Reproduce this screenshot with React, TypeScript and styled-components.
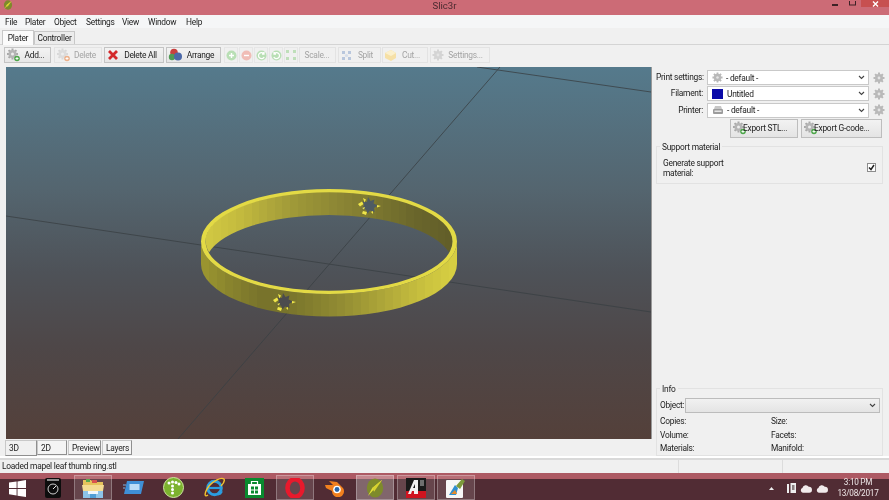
import React from "react";
import styled, { createGlobalStyle } from "styled-components";

const Global = createGlobalStyle`
  html, body { margin: 0; padding: 0; background: #f0f0f0; overflow: hidden; }
  #root { width: 889px; height: 500px; }
  * { box-sizing: border-box; }
`;

const Page = styled.div`
  width: 889px; height: 500px; display: flex; flex-direction: column;
  font-family: Roboto, "Open Sans", sans-serif; font-size: 8.4px; letter-spacing: -0.25px; color: #222;
  overflow: hidden; filter: blur(0.3px); background: #f0f0f0;
`;
const TitleBar = styled.div`
  height: 15px; flex: none; background: #cc6b76; display: grid; grid-template-columns: 1fr auto 1fr; align-items: start;
`;
const TitleIcon = styled.div` padding: 0 0 0 3px; height: 15px; display: flex; `;
const TitleText = styled.div` font-size: 9.6px; letter-spacing: 0; line-height: 11px; color: #4a2a30; `;
const WinControls = styled.div` display: flex; justify-content: flex-end; align-items: flex-start; `;
const WinBtn = styled.div`
  width: ${p => p.$w}px; height: 7px; display: flex; align-items: center; justify-content: center;
  background: ${p => p.$bg || "transparent"}; margin-right: ${p => p.$mr || 0}px;
`;
const MenuBar = styled.div`
  height: 14px; flex: none; background: #f5f6f7; display: flex; padding: 0 0 0 5px; align-items: center;
  border-bottom: 1px solid #f0f0f0;
`;
const MenuItem = styled.span` color: #222; width: ${p => p.$w}px; `;
const TabStrip = styled.div`
  height: 16px; flex: none; background: #f0f0f0; display: flex; align-items: flex-end; padding-left: 2px;
  border-bottom: 1px solid #d4d4d4;
`;
const TopTab = styled.div`
  height: ${p => p.$active ? 15 : 13}px; width: ${p => p.$w}px; display: flex; align-items: center; justify-content: center;
  background: ${p => p.$active ? "#fbfbfb" : "#ececec"}; border: 1px solid #c8c8c8; border-bottom: none;
  margin-bottom: ${p => p.$active ? -1 : 0}px; position: relative;
`;
const Toolbar = styled.div`
  height: 22px; flex: none; display: flex; align-items: flex-start; padding: 2px 0 0 4px; background: #f0f0f0;
`;
const ToolBtn = styled.div`
  width: ${p => p.$w}px; margin-right: ${p => p.$mr ?? 2}px; height: 16px; display: flex; align-items: center; padding-left: 1px;
  background: ${p => p.$off ? "#f0f0f0" : "linear-gradient(#f3f3f3, #e6e6e6)"};
  border: 1px solid ${p => p.$off ? "#e3e3e3" : "#c4c4c4"};
  color: ${p => p.$off ? "#a4a4a4" : "#222"};
`;
const BtnLabel = styled.span` flex: 1; text-align: center; padding-right: 2px; white-space: nowrap; `;
const SmallBtn = styled.div`
  width: 14px; height: 16px; margin-right: 1px; display: flex; align-items: center; justify-content: center;
  border: 1px solid #e6e6e6;
`;
const Main = styled.div` flex: 1; display: flex; min-height: 0; padding-left: 6px; background: #f0f0f0; `;
const CanvasCol = styled.div` width: 646px; flex: none; display: flex; flex-direction: column; `;
const Viewport = styled.div` width: 646px; height: 372px; flex: none; background: #555; line-height: 0; border-right: 1px solid #999; `;
const ViewTabs = styled.div` display: flex; height: 16px; margin: 1px 0 0 -1px; `;
const ViewTab = styled.div`
  width: ${p => p.$w}px; height: ${p => p.$active ? 16 : 15}px; margin-right: ${p => p.$mr ?? 1}px;
  display: flex; align-items: center; padding-left: 3px;
  background: ${p => p.$active ? "#f0f0f0" : "#f4f4f4"};
  border: 1px solid #c8c8c8; border-right: 1px solid #8f8f8f; border-bottom: 1px solid #8f8f8f;
`;
const Sidebar = styled.div` flex: 1; display: flex; flex-direction: column; padding: 3px 0 2px 4px; min-width: 0; `;
const PresetGrid = styled.div`
  display: grid; grid-template-columns: 47px 162px 12px; column-gap: 4px; row-gap: 1.3px; align-items: center;
`;
const PresetLabel = styled.label` text-align: right; white-space: nowrap; line-height: 15px; `;
const Select = styled.div`
  height: 15px; background: #fff; border: 1px solid #c9c9c9; display: flex; align-items: center; padding: 0 3px 0 4px; gap: 3px;
`;
const Grow = styled.span` flex: 1; white-space: nowrap; `;
const Swatch = styled.span` width: 11px; height: 10px; background: #0a0aa8; display: block; flex: none; margin-right: 1px; `;
const ExportRow = styled.div` display: flex; padding-left: 74px; gap: 3px; margin-top: 1px; `;
const ExportBtn = styled.div`
  width: ${p => p.$w}px; height: 19px; background: linear-gradient(#f2f2f2, #e4e4e4); border: 1px solid #bdbdbd;
  display: flex; align-items: center; white-space: nowrap; padding-left: 1px; gap: 0;
  span { margin-left: -4px; position: relative; }
`;
const Group = styled.fieldset`
  margin: ${p => p.$mt || 0}; padding: ${p => p.$pad}; border: 1px solid #e2e2e2; min-width: 0; width: 227px;
  legend { padding: 0 2px; margin-left: 0; line-height: 10px; }
`;
const SupportRow = styled.div` display: flex; justify-content: space-between; align-items: center; padding-left: 3px; `;
const SupportLabel = styled.div` width: 70px; line-height: 10px; `;
const Check = styled.span`
  width: 9px; height: 9px; border: 1px solid #8c8c8c; background: #fff; display: flex; align-items: center; justify-content: center; margin-right: 6px;
`;
const ObjectRow = styled.div` display: flex; align-items: center; `;
const ObjectLabel = styled.span` width: 25px; `;
const ObjectSelect = styled.div`
  width: 195px; height: 15px; background: linear-gradient(#f1f1f1, #e4e4e4); border: 1px solid #bcbcbc;
  display: flex; justify-content: flex-end; align-items: center; padding-right: 3px;
`;
const InfoGrid = styled.div`
  display: grid; grid-template-columns: 111px 1fr; grid-auto-rows: 13.5px; margin-top: 2px; align-items: center;
`;
const Spacer = styled.div` flex: 1; `;
const StatusBar = styled.div`
  height: 15px; flex: none; display: flex; background: #f0f0f0; border-top: 2px solid #d9d9d9;
  box-shadow: 0 -2px 0 #fff;
`;
const StatusCell = styled.div`
  width: ${p => p.$w}; padding-left: 2px; line-height: 12px; border-right: ${p => p.$line ? "1px solid #dcdcdc" : "none"}; white-space: nowrap;
`;
const Taskbar = styled.div`
  height: 27px; flex: none; display: flex; background: #512c34; border-top: 6px solid #ad5a64; position: relative; color: #f0e6e8;
`;
const Start = styled.div` width: 34px; display: flex; align-items: center; justify-content: center; margin-top: -3px; `;
const Slots = styled.div` display: flex; gap: 2.3px; margin-top: -4px; height: 25px; `;
const Slot = styled.div`
  width: 38px; display: flex; align-items: center; justify-content: center;
  background: ${p => p.$state === "active" ? "rgba(255,255,255,.28)" : p.$state === "open" ? "rgba(255,255,255,.12)" : "transparent"};
  border: 1px solid ${p => p.$state ? "rgba(255,255,255,.28)" : "transparent"};
`;
const Tray = styled.div` margin-left: auto; display: flex; align-items: center; gap: 4px; margin-top: -3px; padding-right: 3px; `;
const Clock = styled.div` width: 56px; text-align: center; font-size: 8.2px; line-height: 11px; color: #efe7e8; margin-left: -2px; `;

const gearPath = (cx: number, cy: number, r: number) => {
  let d = "";
  for (let i = 0; i < 8; i++) {
    const a = (i * Math.PI) / 4;
    const x = cx + Math.cos(a) * r, y = cy + Math.sin(a) * r;
    d += `M${(cx + Math.cos(a) * (r * 0.6)).toFixed(1)} ${(cy + Math.sin(a) * (r * 0.6)).toFixed(1)}L${x.toFixed(1)} ${y.toFixed(1)}`;
  }
  return d;
};
const Gear = ({ size = 12, c = "#b9b9b9" }: { size?: number; c?: string }) => (
  <svg width={size} height={size} viewBox="0 0 12 12" style={{ flex: "none" }}>
    <path d={gearPath(6, 6, 5.5)} stroke={c} strokeWidth="2" />
    <circle cx="6" cy="6" r="4" fill={c} />
    <circle cx="6" cy="6" r="1.400" fill="#e4e4e4" />
  </svg>
);
const GearBadge = ({ badge, dim }: { badge: string; dim?: boolean }) => (
  <svg width="15" height="14" viewBox="0 0 15 14" style={{ flex: "none" }}>
    <path d={gearPath(6.5, 6, 5.5)} stroke={dim ? "#d8d8d8" : "#a9a9a9"} strokeWidth="2" />
    <circle cx="6.500" cy="6" r="4" fill={dim ? "#dcdcdc" : "#b5b5b5"} />
    <circle cx="6.500" cy="6" r="1.500" fill="#eee" />
    <circle cx="11" cy="10.500" r="2.800" fill={badge} />
    <path d="M9.500 10.500h3M11 9v3" stroke="#fff" strokeWidth=".9" />
  </svg>
);
const Cross = () => (
  <svg width="14" height="12" viewBox="0 0 14 12" style={{ flex: "none" }}>
    <path d="M3 2l8 8M11 2l-8 8" stroke="#d3282a" strokeWidth="2.800" />
  </svg>
);
const Balls = () => (
  <svg width="15" height="14" viewBox="0 0 15 14" style={{ flex: "none" }}>
    <circle cx="6" cy="4.500" r="3.800" fill="#c8403f" />
    <circle cx="4" cy="9" r="3.200" fill="#4f9a55" />
    <circle cx="10" cy="8.500" r="4" fill="#4b68a8" />
  </svg>
);
const RoundIcon = ({ c, kind }: { c: string; kind: string }) => (
  <svg width="11" height="11" viewBox="0 0 11 11">
    <circle cx="5.500" cy="5.500" r="5" fill={c} />
    {kind === "plus" && <path d="M3 5.500h5M5.500 3v5" stroke="#fff" strokeWidth="1.400" />}
    {kind === "minus" && <path d="M3 5.500h5" stroke="#fff" strokeWidth="1.400" />}
    {kind === "ccw" && <path d="M8 4a3 3 0 1 0 .2 3M8 2v2.200H6" stroke="#fff" strokeWidth="1.200" fill="none" />}
    {kind === "cw" && <path d="M3 4a3 3 0 1 1-.2 3M3 2v2.200h2" stroke="#fff" strokeWidth="1.200" fill="none" />}
  </svg>
);
const FourArrows = () => (
  <svg width="12" height="12" viewBox="0 0 12 12">
    <path d="M1 1h3v3H1zM8 1h3v3H8zM1 8h3v3H1zM8 8h3v3H8z" fill="#bfdfba" />
  </svg>
);
const SplitIcon = () => (
  <svg width="13" height="13" viewBox="0 0 13 13" style={{ flex: "none" }}>
    <path d="M2 2h3v3H2zM8 2h3v3H8zM2 8h3v3H2zM8 8h3v3H8z" fill="#b9c7dd" />
    <circle cx="6.500" cy="6.500" r="1.600" fill="#d6deea" />
  </svg>
);
const BoxIcon = () => (
  <svg width="13" height="13" viewBox="0 0 13 13" style={{ flex: "none" }}>
    <path d="M1 4l6-3 5 3v5l-5 3-6-3z" fill="#f6e0a6" />
    <path d="M1 4l6 3 5-3-5-3z" fill="#fbf0cd" />
  </svg>
);
const Chevron = () => (
  <svg width="7" height="5" viewBox="0 0 7 5" style={{ flex: "none" }}>
    <path d="M1 1l2.500 2.500L6 1" stroke="#444" strokeWidth="1.100" fill="none" />
  </svg>
);
const PrinterIcon = () => (
  <svg width="12" height="10" viewBox="0 0 12 10" style={{ flex: "none" }}>
    <path d="M3 1h6l1 3H2z" fill="#c7c7c7" />
    <rect x="1" y="4" width="10" height="5" rx="1" fill="#9c9c9c" />
    <rect x="2.500" y="5.500" width="7" height="1.500" fill="#e5e5e5" />
  </svg>
);
const Leaf = ({ size = 14 }: { size?: number }) => (
  <svg width={size} height={size} viewBox="0 0 20 22">
    <ellipse cx="10" cy="11" rx="9" ry="10.500" fill="#7e8a2b" />
    <path d="M18 2L2 20l5-9z" fill="#e6e23a" />
    <path d="M18 2L7 11l2 4z" fill="#d8d42f" />
  </svg>
);

const hex = (c: string) => [1, 3, 5].map(i => parseInt(c.slice(i, i + 2), 16));
const facets = (keys: string[], n: number) => {
  const out: React.ReactNode[] = [];
  for (let i = 0; i < n; i++) {
    const t = (i / (n - 1)) * (keys.length - 1);
    const k = Math.min(Math.floor(t), keys.length - 2);
    const a = hex(keys[k]), b = hex(keys[k + 1]);
    const c = `rgb(${a.map((v, j) => Math.round(v + (b[j] - v) * (t - k))).join(",")})`;
    out.push(<stop key={i + "a"} offset={i / n} stopColor={c} />);
    out.push(<stop key={i + "b"} offset={(i + 1) / n} stopColor={c} />);
  }
  return out;
};
const backKeys = ["#d0c742", "#c4bb3e", "#afa73b", "#9c9637", "#908a35", "#837e32", "#75712e", "#69652b", "#625e29"];
const frontKeys = ["#9a9430", "#87822d", "#78732b", "#78742c", "#85802f", "#938d33", "#a59e37", "#b8b03b", "#cac23e", "#d6ce42"];

const Star = ({ x, y, fill }: { x: number; y: number; fill: string }) => (
  <g transform={`translate(${x} ${y})`}>
    <path d="M0 -8l2.500 4 4 -1.500 -1 4 4.500 2 -4 2.500 .5 4 -4.500 -1.500 -2.500 3 -1.500 -4 -4.500 -.5 2.500 -3.500 -1.500 -4 4.500 .5z" fill={fill} />
    <path d="M-10 -1l4 -2.500 1.500 2.500 -3.500 2.500zM9 0l4 1 -4 1.500zM-5 6l4 1 -1 3 -4 -1.500zM-5 -7l3 1.500 -1.500 3zM3 7l2 -1 0 3zM-6 3l3 -1 -1 2.500z" fill="#efe64a" />
  </g>
);

const ThreeD = () => (
  <svg width="645" height="372" viewBox="6 67 645 372">
    <defs>
      <linearGradient id="bg" x1="0" y1="0" x2="0" y2="1">
        <stop offset="0" stopColor="#557a8c" />
        <stop offset="0.33" stopColor="#54656f" />
        <stop offset="0.55" stopColor="#4e5258" />
        <stop offset="0.75" stopColor="#4e4748" />
        <stop offset="1" stopColor="#54403a" />
      </linearGradient>
      <linearGradient id="back" gradientUnits="userSpaceOnUse" x1="205" x2="453" y1="0" y2="0">{facets(backKeys, 32)}</linearGradient>
      <linearGradient id="front" gradientUnits="userSpaceOnUse" x1="201" x2="457" y1="0" y2="0">{facets(frontKeys, 32)}</linearGradient>
    </defs>
    <rect x="6" y="67" width="645" height="372" fill="url(#bg)" />
    <g stroke="#3a4044" strokeWidth="1" opacity=".8" fill="none">
      <path d="M500 67L178 439" />
      <path d="M6 216L651 312" />
      <path d="M477 67L651 92" />
    </g>
    <path d="M209 252.500A123.500 49.200 0 1 1 449 252.500A123.500 49.200 0 0 0 209 252.500Z" fill="url(#back)" />
    <path d="M201 241.500A128 52.500 0 0 0 457 241.500V264A128 52.500 0 0 1 201 264Z" fill="url(#front)" />
    <path fillRule="evenodd" d="M201 241.500A128 52.500 0 1 1 457 241.500A128 52.500 0 1 1 201 241.500ZM205.500 241.500A123.500 49.200 0 1 0 452.500 241.500A123.500 49.200 0 1 0 205.500 241.500Z" fill="#e3da45" />
    <Star x={368} y={205} fill="#4e5b63" />
    <Star x={283} y={301} fill="#4b4b4e" />
  </svg>
);

const Win8 = () => (
  <svg width="17" height="17" viewBox="0 0 17 17">
    <path d="M0 2.600L7.600 1.500v6.400H0zM8.500 1.400L17 0v7.900H8.500zM0 8.900h7.600v6.500L0 14.300zM8.500 8.900H17V17l-8.500-1.300z" fill="#fff" />
  </svg>
);
const Watch = () => (
  <svg width="18" height="20" viewBox="0 0 18 20">
    <rect x="1" y="0" width="16" height="20" rx="2" fill="#0d0d0d" />
    <rect x="3" y="1" width="12" height="2" fill="#8a8a8a" />
    <circle cx="9" cy="11" r="5" fill="none" stroke="#cfcfcf" strokeWidth="1" />
    <path d="M9 11l3-3" stroke="#e8e8e8" />
  </svg>
);
const Folder = () => (
  <svg width="22" height="20" viewBox="0 0 22 20">
    <path d="M1 2h8l2 2h10v9H1z" fill="#e6c35c" />
    <rect x="4" y="1" width="4" height="3" fill="#5aa84d" />
    <rect x="10" y="2" width="5" height="3" fill="#d9534f" />
    <path d="M0 7h22l-1 6H1z" fill="#f4dc92" />
    <path d="M1 13h20v7H1z" fill="#8cc4e8" />
    <rect x="6" y="13" width="10" height="3" fill="#eef7fd" />
    <rect x="8" y="16" width="6" height="4" fill="#4f9ed6" />
  </svg>
);
const BlueApp = () => (
  <svg width="21" height="15" viewBox="0 0 21 15">
    <path d="M4 1h17l-3 13H1z" fill="#3f8fd6" />
    <rect x="6.500" y="4" width="10" height="6" fill="#bcdcf6" />
    <path d="M0 5h3M0 8h2" stroke="#7fb6e8" />
  </svg>
);
const GreenT = () => (
  <svg width="21" height="21" viewBox="0 0 21 21">
    <circle cx="10.500" cy="10.500" r="10" fill="#7cb22e" />
    <circle cx="10.500" cy="10.500" r="10" fill="none" stroke="#cfe6a0" strokeWidth="1" />
    {[[6,6],[9.5,5],[13,5.5],[16,7],[9.5,9],[9.5,12.5],[9.5,16]].map(([x, y], i) => (
      <circle key={i} cx={x} cy={y} r="1.500" fill="#fff" />
    ))}
  </svg>
);
const IE = () => (
  <svg width="21" height="21" viewBox="0 0 21 21">
    <circle cx="10.500" cy="11" r="6.800" fill="none" stroke="#2b9de0" strokeWidth="3" />
    <path d="M4 11h13" stroke="#2b9de0" strokeWidth="2.200" />
    <path d="M14 14.500h5l-2 3-3 1z" fill="#2b9de0" />
    <path d="M4 18C0 21 0 16 5 9c4-5 12-9 15-7 1 2-1 5-3 7" fill="none" stroke="#f3c22e" strokeWidth="1.400" />
  </svg>
);
const Store = () => (
  <svg width="19" height="20" viewBox="0 0 19 20">
    <rect width="19" height="20" fill="#0a8a2f" />
    <path d="M3 6h13v11H3z" fill="#fff" />
    <path d="M6.500 6V3.500h6V6" stroke="#fff" fill="none" strokeWidth="1.200" />
    <path d="M6 8.500h3v3H6zM10 8.500h3v3h-3zM6 12.500h3v3H6zM10 12.500h3v3h-3z" fill="#0a8a2f" />
  </svg>
);
const Opera = () => (
  <svg width="20" height="20" viewBox="0 0 20 20">
    <ellipse cx="10" cy="10" rx="7.500" ry="8.800" fill="none" stroke="#e8192c" strokeWidth="4.600" />
  </svg>
);
const BlenderIcon = () => (
  <svg width="20" height="18" viewBox="0 0 20 18">
    <path d="M0 6h8L4 2l8 1 6 6a6 6 0 1 1-11 3L1 9z" fill="#f2801e" />
    <circle cx="12" cy="10.500" r="3.800" fill="#fff" />
    <circle cx="12" cy="10.500" r="2.400" fill="#2b65a8" />
  </svg>
);
const RedA = () => (
  <svg width="20" height="20" viewBox="0 0 20 20">
    <rect width="20" height="20" fill="#1a1a1a" />
    <rect y="13" width="20" height="7" fill="#cf1420" />
    <path d="M2 16L8 2h4v14H8v-3H6l-1 3zM7 10h2V6z" fill="#f2f2f2" fillRule="evenodd" />
    <path d="M14 2h4v6h-4z" fill="#6f6f6f" />
  </svg>
);
const Note = () => (
  <svg width="20" height="20" viewBox="0 0 20 20">
    <rect y="2" width="17" height="18" rx="1" fill="#f7f7f7" />
    <path d="M3 17L9 7l3 3-2 7z" fill="#2f8fd0" />
    <path d="M5 16l4-4 2 4z" fill="#e68a2a" />
    <path d="M10 8l6-7 3 2-5 8z" fill="#7c9a3b" />
  </svg>
);
const Cloud = () => (
  <svg width="12" height="9" viewBox="0 0 13 9"><path d="M3 9a2.600 2.600 0 0 1-.4-5A3.800 3.800 0 0 1 9.500 2.600 3.200 3.200 0 0 1 10 9z" fill="#f1eaeb" /></svg>
);
const Flag = () => (
  <svg width="9" height="10" viewBox="0 0 9 10"><path d="M0 1h2v9H0zM3.500 0H9v10H3.500z" fill="#eee" /><path d="M5 2h2.500v5H5z" fill="#8a7f80" /></svg>
);

const menus: [string, number][] = [["File", 20], ["Plater", 29], ["Object", 32], ["Settings", 36], ["View", 26], ["Window", 38], ["Help", 20]];

export default function App() {
  return (
    <Page>
      <Global />
      <TitleBar>
        <TitleIcon><Leaf size={10} /></TitleIcon>
        <TitleText>Slic3r</TitleText>
        <WinControls>
          <WinBtn $w={8} $mr={9}><svg width="6" height="5"><rect y="3" width="6" height="2" fill="#3d2226" /></svg></WinBtn>
          <WinBtn $w={8} $mr={5}><svg width="7" height="5"><rect x=".5" y="-2" width="6" height="6" fill="none" stroke="#3d2226" /></svg></WinBtn>
          <WinBtn $w={28} $bg="#c75050"><svg width="7" height="6"><path d="M1 .5l5 5M6 .5l-5 5" stroke="#fff" strokeWidth="1.400" /></svg></WinBtn>
        </WinControls>
      </TitleBar>
      <MenuBar>
        {menus.map(([m, w]) => <MenuItem key={m} $w={w}>{m}</MenuItem>)}
      </MenuBar>
      <TabStrip>
        <TopTab $active $w={32}>Plater</TopTab>
        <TopTab $w={41}>Controller</TopTab>
      </TabStrip>
      <Toolbar>
        <ToolBtn $w={47} $mr={3}><GearBadge badge="#4da64a" /><BtnLabel>Add...</BtnLabel></ToolBtn>
        <ToolBtn $w={48} $off><GearBadge badge="#ecb08a" dim /><BtnLabel>Delete</BtnLabel></ToolBtn>
        <ToolBtn $w={60}><Cross /><BtnLabel>Delete All</BtnLabel></ToolBtn>
        <ToolBtn $w={55} $mr={3}><Balls /><BtnLabel>Arrange</BtnLabel></ToolBtn>
        <SmallBtn><RoundIcon c="#b9dfb5" kind="plus" /></SmallBtn>
        <SmallBtn><RoundIcon c="#f0bdb6" kind="minus" /></SmallBtn>
        <SmallBtn><RoundIcon c="#b9dfb5" kind="ccw" /></SmallBtn>
        <SmallBtn><RoundIcon c="#b9dfb5" kind="cw" /></SmallBtn>
        <SmallBtn><FourArrows /></SmallBtn>
        <ToolBtn $w={37} $off><BtnLabel>Scale...</BtnLabel></ToolBtn>
        <ToolBtn $w={43} $off $mr={1}><SplitIcon /><BtnLabel>Split</BtnLabel></ToolBtn>
        <ToolBtn $w={46} $off><BoxIcon /><BtnLabel>Cut...</BtnLabel></ToolBtn>
        <ToolBtn $w={60} $off><Gear c="#d4d4d4" size={12} /><BtnLabel>Settings...</BtnLabel></ToolBtn>
      </Toolbar>
      <Main>
        <CanvasCol>
          <Viewport><ThreeD /></Viewport>
          <ViewTabs>
            <ViewTab $active $w={32} $mr={0}>3D</ViewTab>
            <ViewTab $w={30}>2D</ViewTab>
            <ViewTab $w={33}>Preview</ViewTab>
            <ViewTab $w={30}>Layers</ViewTab>
          </ViewTabs>
        </CanvasCol>
        <Sidebar>
          <PresetGrid>
            <PresetLabel>Print settings:</PresetLabel>
            <Select><Gear size={11} /><Grow>- default -</Grow><Chevron /></Select>
            <Gear size={12} />
            <PresetLabel>Filament:</PresetLabel>
            <Select><Swatch /><Grow>Untitled</Grow><Chevron /></Select>
            <Gear size={12} />
            <PresetLabel>Printer:</PresetLabel>
            <Select><PrinterIcon /><Grow>- default -</Grow><Chevron /></Select>
            <Gear size={12} />
          </PresetGrid>
          <ExportRow>
            <ExportBtn $w={68}><GearBadge badge="#4da64a" /><span>Export STL...</span></ExportBtn>
            <ExportBtn $w={81}><GearBadge badge="#4da64a" /><span>Export G-code...</span></ExportBtn>
          </ExportRow>
          <Group $mt="4px 0 0" $pad="6px 0 5px 3px">
            <legend>Support material</legend>
            <SupportRow>
              <SupportLabel>Generate support material:</SupportLabel>
              <Check><svg width="7" height="7"><path d="M1 3.500l2 2L6 1" stroke="#222" strokeWidth="1.500" fill="none" /></svg></Check>
            </SupportRow>
          </Group>
          <Spacer />
          <Group $pad="4px 2px 0 3px">
            <legend>Info</legend>
            <ObjectRow>
              <ObjectLabel>Object:</ObjectLabel>
              <ObjectSelect><Chevron /></ObjectSelect>
            </ObjectRow>
            <InfoGrid>
              <span>Copies:</span><span>Size:</span>
              <span>Volume:</span><span>Facets:</span>
              <span>Materials:</span><span>Manifold:</span>
            </InfoGrid>
          </Group>
        </Sidebar>
      </Main>
      <StatusBar>
        <StatusCell $w="679px" $line>Loaded mapel leaf thumb ring.stl</StatusCell>
        <StatusCell $w="104px" $line />
        <StatusCell $w="106px" />
      </StatusBar>
      <Taskbar>
        <Start><Win8 /></Start>
        <Slots>
          <Slot><Watch /></Slot>
          <Slot $state="open"><Folder /></Slot>
          <Slot><BlueApp /></Slot>
          <Slot><GreenT /></Slot>
          <Slot><IE /></Slot>
          <Slot><Store /></Slot>
          <Slot $state="open"><Opera /></Slot>
          <Slot><BlenderIcon /></Slot>
          <Slot $state="active"><Leaf size={20} /></Slot>
          <Slot $state="open"><RedA /></Slot>
          <Slot $state="open"><Note /></Slot>
        </Slots>
        <Tray>
          <svg width="5" height="3" style={{ marginRight: 9 }}><path d="M0 3l2.500-3L5 3z" fill="#eee" /></svg>
          <Flag />
          <Cloud />
          <Cloud />
          <Clock>3:10 PM<br />13/08/2017</Clock>
        </Tray>
      </Taskbar>
    </Page>
  );
}
